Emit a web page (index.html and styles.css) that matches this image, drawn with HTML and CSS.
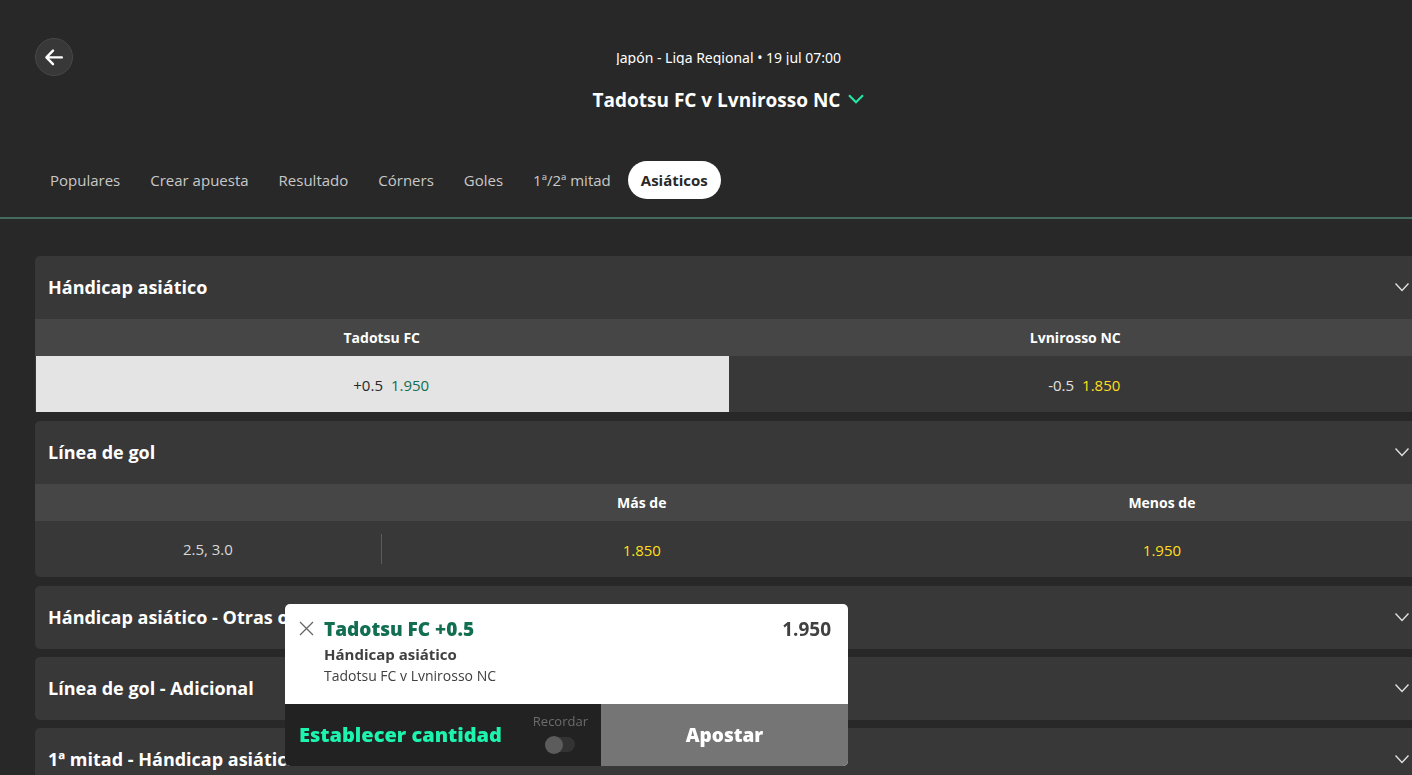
FILE: index.html
```html
<!DOCTYPE html>
<html lang="es">
<head>
<meta charset="utf-8">
<meta name="viewport" content="width=device-width, initial-scale=1">
<title>Tadotsu FC v Lvnirosso NC</title>
<link rel="stylesheet" href="styles.css">
</head>
<body>
<div class="page">
  <header class="event">
    <button class="back" type="button" aria-label="Volver">
      <svg width="20" height="18" viewBox="0 0 20 18" fill="none" stroke="#fff" stroke-width="2.4" stroke-linecap="round" stroke-linejoin="round"><path d="M9 2.6 2.4 9.4 9 16.2M2.6 9.4H17.8"/></svg>
    </button>
    <div class="event-info">
      <p class="event-meta">Japón - Liga Regional • 19 jul 07:00</p>
      <h1 class="event-title"><button class="event-switch" type="button">Tadotsu FC v Lvnirosso NC
        <svg width="16" height="12" viewBox="0 0 16 12" fill="none" stroke="#26e5a4" stroke-width="2.2"><path d="M1 1.2 8 8.2 15 1.2"/></svg></button></h1>
    </div>
  </header>
  <nav class="tabs">
    <a class="tab" href="#populares">Populares</a>
    <a class="tab" href="#crear">Crear apuesta</a>
    <a class="tab" href="#resultado">Resultado</a>
    <a class="tab" href="#corners">Córners</a>
    <a class="tab" href="#goles">Goles</a>
    <a class="tab" href="#mitad">1ª/2ª mitad</a>
    <a class="tab tab-active" href="#asiaticos" aria-current="page">Asiáticos</a>
  </nav>
  <main class="markets">
    <section class="market market-open">
      <h2 class="market-title"><button class="market-toggle" type="button" aria-expanded="true">Hándicap asiático
        <svg class="chevron" viewBox="0 0 14 12"><path d="M.5 1.5 7 8.5l6.5-7"/></svg></button></h2>
      <table class="odds">
        <thead><tr><th>Tadotsu FC</th><th>Lvnirosso NC</th></tr></thead>
        <tbody><tr>
          <td><button class="pick pick-lined pick-selected" type="button"><span>+0.5</span><span class="price">1.950</span></button></td>
          <td><button class="pick pick-lined" type="button"><span>-0.5</span><span class="price">1.850</span></button></td>
        </tr></tbody>
      </table>
    </section>
    <section class="market market-open">
      <h2 class="market-title"><button class="market-toggle" type="button" aria-expanded="true">Línea de gol
        <svg class="chevron" viewBox="0 0 14 12"><path d="M.5 1.5 7 8.5l6.5-7"/></svg></button></h2>
      <table class="odds">
        <thead><tr><td class="line-col"></td><th>Más de</th><th>Menos de</th></tr></thead>
        <tbody><tr>
          <th class="line" scope="row"><span class="line-value">2.5, 3.0</span></th>
          <td><button class="pick" type="button"><span class="price">1.850</span></button></td>
          <td><button class="pick" type="button"><span class="price">1.950</span></button></td>
        </tr></tbody>
      </table>
    </section>
    <section class="market">
      <h2 class="market-title"><button class="market-toggle" type="button" aria-expanded="false">Hándicap asiático - Otras opciones
        <svg class="chevron" viewBox="0 0 14 12"><path d="M.5 1.5 7 8.5l6.5-7"/></svg></button></h2>
    </section>
    <section class="market">
      <h2 class="market-title"><button class="market-toggle" type="button" aria-expanded="false">Línea de gol - Adicional
        <svg class="chevron" viewBox="0 0 14 12"><path d="M.5 1.5 7 8.5l6.5-7"/></svg></button></h2>
    </section>
    <section class="market">
      <h2 class="market-title"><button class="market-toggle" type="button" aria-expanded="false">1ª mitad - Hándicap asiático
        <svg class="chevron" viewBox="0 0 14 12"><path d="M.5 1.5 7 8.5l6.5-7"/></svg></button></h2>
    </section>
  </main>
</div>
<aside class="slip" aria-label="Boleto">
  <div class="slip-bet">
    <button class="remove" type="button" aria-label="Quitar">
      <svg width="15" height="15" viewBox="0 0 15 15" fill="none" stroke="#666" stroke-width="1.3"><path d="M1 1l13 13M14 1 1 14"/></svg>
    </button>
    <div class="slip-text">
      <p class="slip-pick">Tadotsu FC +0.5</p>
      <p class="slip-market">Hándicap asiático</p>
      <p class="slip-event">Tadotsu FC v Lvnirosso NC</p>
    </div>
    <span class="slip-price">1.950</span>
  </div>
  <div class="slip-actions">
    <div class="stake">
      <button class="stake-set" type="button">Establecer cantidad</button>
      <label class="remember" for="remember">Recordar
        <input class="switch" id="remember" type="checkbox">
      </label>
    </div>
    <button class="place" type="button">Apostar</button>
  </div>
</aside>
</body>
</html>
```
FILE: styles.css
```css
* { box-sizing: border-box; }

html { height: 100%; overflow: hidden; }

body {
  height: 100%;
  margin: 0;
  overflow: hidden;
  background: #282828;
  color: #fff;
  font-family: "Open Sans", "Noto Sans", sans-serif;
  font-size: 15px;
  line-height: 20px;
}

h1, h2, p { margin: 0; }

button {
  padding: 0;
  border: 0;
  background: none;
  color: inherit;
  font: inherit;
  cursor: pointer;
}

svg { display: block; flex: none; }

/* The event page runs past the right edge of the window */
.page { margin-right: -45px; }

.event {
  display: grid;
  grid-template-columns: 38px 1fr 38px;
  align-items: start;
  padding: 38px 35px 0;
}

.back {
  display: grid;
  place-items: center;
  width: 38px;
  height: 38px;
  border: 1px solid #484848;
  border-radius: 50%;
  background: #383838;
}

.event-info {
  display: flex;
  flex-direction: column;
  align-items: center;
  gap: 20px;
  padding-top: 11px;
}

.event-meta {
  height: 16px;
  overflow-y: clip;
  font-family: "Noto Sans", "Open Sans", sans-serif;
  font-size: 14px;
  line-height: 18px;
}

.event-title { font-size: 19px; line-height: 30px; }

.event-switch {
  display: flex;
  align-items: center;
  gap: 8px;
}

.tabs {
  display: flex;
  gap: 4px;
  padding: 46px 37px 18px;
  border-bottom: 2px solid #446b5f;
}

.tab {
  padding: 0 13px;
  border-radius: 19px;
  color: #c8c8c8;
  line-height: 38px;
  text-decoration: none;
}

.tab-active {
  background: #fff;
  color: #282828;
  font-weight: 700;
}

.markets {
  display: flex;
  flex-direction: column;
  gap: 8px;
  padding: 37px 35px 0;
}

.market {
  border-radius: 5px;
  background: #383838;
}

.market-open { margin-bottom: 1px; }

.market-title { font-size: 18px; line-height: 63px; }

.market-toggle {
  display: flex;
  align-items: center;
  justify-content: space-between;
  width: 100%;
  padding: 0 13px;
}

.chevron {
  width: 14px;
  height: 12px;
  fill: none;
  stroke: #e0e0e0;
  stroke-width: 1.4;
}

.odds {
  width: 100%;
  border-collapse: collapse;
  table-layout: fixed;
}

.odds th, .odds td { padding: 0; }

.odds thead tr {
  height: 37px;
  background: #464646;
  font-size: 14px;
}

.odds tbody tr { height: 56px; }

.line-col { width: 25%; }

.odds .line { color: #d8d8d8; font-weight: 400; }

.line-value {
  display: block;
  border-right: 1px solid #5c5c5c;
  line-height: 30px;
}

.pick {
  display: flex;
  align-items: center;
  justify-content: center;
  gap: 8px;
  width: 100%;
  height: 56px;
  padding-top: 1px;
  color: #e0e0e0;
}

.pick-lined { padding-left: 18px; }

.price { color: #ffdf1b; }

.pick-selected {
  border-left: 1px solid #383838;
  background: #e4e4e4;
  color: #282828;
}

.pick-selected .price { color: #126e51; }

.slip {
  position: fixed;
  bottom: 9px;
  left: 285px;
  width: 563px;
  overflow: hidden;
  border-radius: 5px;
  background: #fff;
}

.slip-bet {
  display: flex;
  align-items: flex-start;
  gap: 10px;
  min-height: 100px;
  padding: 13px 17px 16px 14px;
  color: #404040;
}

.remove { padding-top: 4px; }

.slip-text { flex: 1; }

.slip-pick {
  color: #126e51;
  font-size: 19px;
  font-weight: 800;
  line-height: 25px;
}

.slip-market { font-weight: 700; line-height: 25px; }

.slip-event { font-size: 14px; line-height: 18px; }

.slip-price { font-size: 19px; font-weight: 700; line-height: 25px; }

.slip-actions { display: flex; height: 62px; }

.stake {
  display: flex;
  flex: 1;
  align-items: center;
  justify-content: space-between;
  padding: 0 13px 0 14px;
  background: #222;
}

.stake-set {
  color: #1df5ae;
  font-size: 20px;
  font-weight: 800;
}

.remember {
  display: flex;
  flex-direction: column;
  align-items: center;
  gap: 7px;
  padding-bottom: 6px;
  color: #6c6c6c;
  font-size: 13px;
  line-height: 18px;
}

.switch {
  display: flex;
  align-items: center;
  width: 30px;
  height: 15px;
  margin: 0;
  border-radius: 8px;
  background: #333;
  appearance: none;
}

.switch::before {
  width: 18px;
  height: 18px;
  flex: none;
  border-radius: 50%;
  background: #5c5c5c;
  content: "";
}

.place {
  width: 247px;
  background: #757575;
  font-size: 19px;
  font-weight: 800;
}
```
